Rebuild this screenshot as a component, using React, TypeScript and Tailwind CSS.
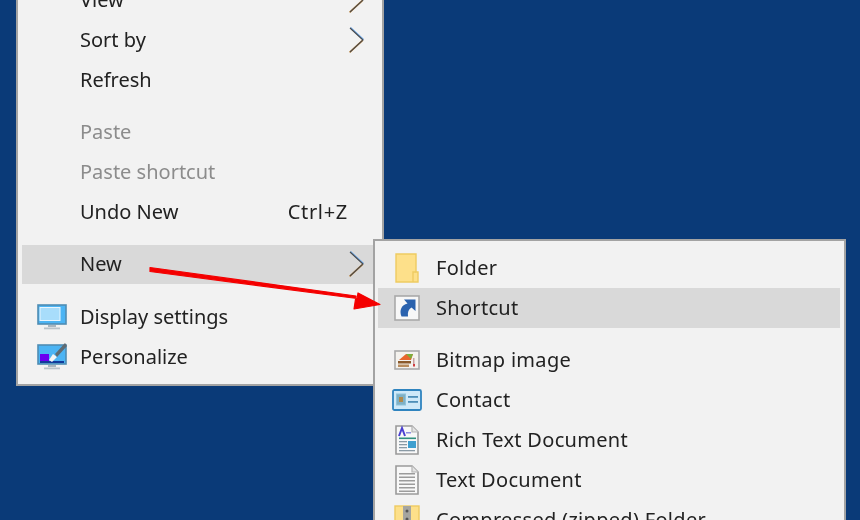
import React from "react";

const Chevron = () => (
  <svg width="16" height="28" viewBox="0 0 16 28" className="shrink-0">
    <polyline points="1,2 14,14" fill="none" stroke="#6aa6e8" strokeWidth="1.6" transform="translate(0.4,-0.3)" />
    <polyline points="14,14 1,26" fill="none" stroke="#c98a3c" strokeWidth="1.6" transform="translate(-0.4,0.3)" />
    <polyline points="1,2 14,14 1,26" fill="none" stroke="#4b4b4b" strokeWidth="1.1" />
  </svg>
);

const Monitor = ({ paint }: { paint?: boolean }) => (
  <svg width="30" height="28" viewBox="0 0 30 28">
    <rect x="1" y="2" width="28" height="19" fill="#4bb4f4" stroke="#4f8db3" strokeWidth="1.6" />
    <rect x="11" y="22" width="8" height="2" fill="#a9b6bf" />
    <rect x="7" y="24.5" width="16" height="1.8" fill="#b8c2c9" />
    {paint ? (
      <>
        <rect x="3" y="11" width="9" height="8" fill="#6a00f0" />
        <rect x="3" y="18" width="24" height="2" fill="#123a9a" />
        <path d="M12 17 L16 11 L20 14 L15 19 Z" fill="#f4f4f4" />
        <path d="M18 11 L28 0 L30 3 L20 14 Z" fill="#5f6b73" />
      </>
    ) : (
      <rect x="3" y="4.5" width="20" height="13" fill="#a8ddfb" stroke="#e9f6fe" strokeWidth="1" />
    )}
  </svg>
);

const Folder = () => (
  <svg width="24" height="30" viewBox="0 0 24 30">
    <path d="M1 1 H21 V19 H23 V29 H1 Z" fill="#fde08a" stroke="#eecb62" strokeWidth="1.4" />
    <path d="M21 19 H18 V29" fill="none" stroke="#eecb62" strokeWidth="1.4" />
  </svg>
);

const Shortcut = () => (
  <svg width="26" height="26" viewBox="0 0 26 26">
    <rect x="1" y="1" width="24" height="24" fill="#f7f7f7" stroke="#a9a9a9" strokeWidth="1.6" />
    <path d="M21.5 4.5 V16 L17.5 12.5 C14.5 14 13.5 17 14 21.5 L7.5 21.5 C5 15 7.5 10 13.5 8.5 L10 4.5 Z" fill="#2a62ae" />
  </svg>
);

const Bitmap = () => (
  <svg width="26" height="20" viewBox="0 0 26 20">
    <rect x="1" y="1" width="24" height="18" fill="#f4f2ee" stroke="#a9a9a9" strokeWidth="1.6" />
    <path d="M5 10 L12 4 H19 L17 10 Z" fill="#e8662e" />
    <path d="M12 4 H19 L17 9 Z" fill="#7cae3c" />
    <rect x="4" y="11" width="13" height="2.5" fill="#8b5a2b" />
    <rect x="4" y="14.5" width="11" height="2.5" fill="#b98d5e" />
    <rect x="19" y="8" width="1.5" height="8" fill="#c7a0a0" />
    <rect x="19" y="14" width="2" height="2.5" fill="#d04040" />
  </svg>
);

const Contact = () => (
  <svg width="30" height="22" viewBox="0 0 30 22">
    <rect x="1" y="1" width="28" height="20" rx="1.5" fill="#cfe9f8" stroke="#2f84bf" strokeWidth="1.8" />
    <rect x="4.5" y="5" width="9" height="11" fill="#7fb0c4" stroke="#8fc4dc" strokeWidth="1" />
    <rect x="7" y="8" width="4" height="5" fill="#b08a4c" />
    <rect x="16" y="7" width="10" height="1.8" fill="#4e8fb8" />
    <rect x="16" y="12" width="10" height="1.8" fill="#4e8fb8" />
  </svg>
);

const Page = ({ children }: { children?: React.ReactNode }) => (
  <svg width="24" height="30" viewBox="0 0 24 30">
    <path d="M1 1 H17 L23 7 V29 H1 Z" fill="#f8f8f8" stroke="#9a9a9a" strokeWidth="1.6" />
    <path d="M17 1 V7 H23" fill="#e4e4e4" stroke="#b4b4b4" strokeWidth="1.2" />
    {children}
  </svg>
);

const Rich = () => (
  <Page>
    <path d="M4 11 L7 3 L10 11" fill="none" stroke="#4a3fd0" strokeWidth="2" />
    <rect x="11" y="7" width="5" height="1.5" fill="#8d8de0" />
    <rect x="4" y="12.5" width="17" height="1.6" fill="#2f8f7f" />
    <rect x="4" y="16" width="8" height="1.3" fill="#8a9aa5" />
    <rect x="4" y="19" width="8" height="1.3" fill="#8a9aa5" />
    <rect x="4" y="22" width="8" height="1.3" fill="#8a9aa5" />
    <rect x="4" y="25" width="16" height="1.3" fill="#8a9aa5" />
    <rect x="13" y="16" width="8" height="7" fill="#3f9fcf" />
  </Page>
);

const TextDoc = () => (
  <Page>
    {[8, 11.5, 15, 18.5, 22, 25.5].map((y) => (
      <rect key={y} x="4" y={y} width="16" height="1.5" fill="#9c9c9c" />
    ))}
  </Page>
);

const Zip = () => (
  <svg width="26" height="30" viewBox="0 0 26 30">
    <rect x="1" y="1" width="24" height="28" fill="#fde08a" stroke="#eecb62" strokeWidth="1.4" />
    <rect x="9" y="1" width="8" height="28" fill="#a5a5a0" />
    <circle cx="13" cy="6" r="1.5" fill="#555" />
    <circle cx="13" cy="14" r="1.5" fill="#555" />
  </svg>
);

const font = "font-['Noto_Sans',sans-serif] text-[20px] whitespace-nowrap";

type LeftProps = { label: string; icon?: React.ReactNode; chevron?: boolean; hint?: string; disabled?: boolean; active?: boolean };

const LeftRow = ({ label, icon, chevron, hint, disabled, active }: LeftProps) => (
  <div className={`flex h-[39.7px] items-center ${active ? "bg-[#d9d9d9]" : ""} ${disabled ? "text-[#8c8c8c]" : "text-[#222222]"}`}>
    <div className="flex w-[58px] justify-center pl-[1px]">{icon}</div>
    <span className={font}>{label}</span>
    <div className="flex-1" />
    {hint && <span className={`${font} mr-[32px] tracking-[0.7px]`}>{hint}</span>}
    {chevron && <div className="mr-[15px] flex"><Chevron /></div>}
  </div>
);

const SubRow = ({ label, icon, active }: { label: string; icon: React.ReactNode; active?: boolean }) => (
  <div className={`flex h-[40px] items-center text-[#222222] ${active ? "bg-[#d9d9d9]" : ""}`}>
    <div className="flex w-[58px] justify-center">{icon}</div>
    <span className={`${font} tracking-[0.3px]`}>{label}</span>
  </div>
);

export default function App() {
  return (
    <div className="relative h-[520px] w-[860px] overflow-hidden bg-[#0a3a78] blur-[0.6px]">
      <div className="absolute left-[16px] top-[-28.6px] w-[368px] border-2 border-[#a3a3a3] bg-[#f2f2f2] pt-[7px] pb-[7.6px] pl-[4px] pr-[2px]">
        <LeftRow label="View" chevron />
        <LeftRow label="Sort by" chevron />
        <LeftRow label="Refresh" />
        <div className="h-[13px]" />
        <LeftRow label="Paste" disabled />
        <LeftRow label="Paste shortcut" disabled />
        <LeftRow label="Undo New" hint="Ctrl+Z" />
        <div className="h-[13px]" />
        <LeftRow label="New" chevron active />
        <div className="h-[13px]" />
        <LeftRow label="Display settings" icon={<Monitor />} />
        <LeftRow label="Personalize" icon={<Monitor paint />} />
      </div>
      <div className="absolute left-[373px] top-[239px] w-[473px] border-2 border-[#a3a3a3] bg-[#f2f2f2] py-[7px] pl-[3px] pr-[4px]">
        <SubRow label="Folder" icon={<Folder />} />
        <SubRow label="Shortcut" icon={<Shortcut />} active />
        <div className="h-[12px]" />
        <SubRow label="Bitmap image" icon={<Bitmap />} />
        <SubRow label="Contact" icon={<Contact />} />
        <SubRow label="Rich Text Document" icon={<Rich />} />
        <SubRow label="Text Document" icon={<TextDoc />} />
        <SubRow label="Compressed (zipped) Folder" icon={<Zip />} />
      </div>
      <svg className="absolute left-0 top-0" width="860" height="520" viewBox="0 0 860 520">
        <path d="M150 267.5 L356 296 L354 309 L380 304.5 L358 293 L357 298.5 L150 271.5 Z" fill="#f40000" stroke="#f40000" strokeWidth="1.2" strokeLinejoin="round" />
      </svg>
    </div>
  );
}
